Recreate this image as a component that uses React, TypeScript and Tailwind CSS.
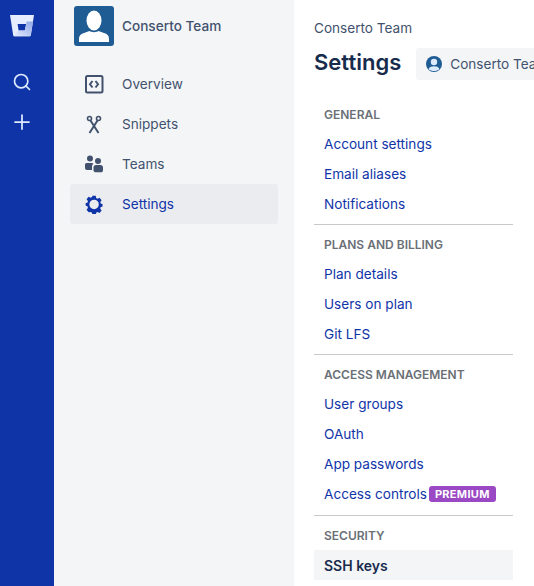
import { Plus, Search } from 'lucide-react'

const navigation = [
  { name: 'Overview', icon: OverviewIcon },
  { name: 'Snippets', icon: SnippetsIcon },
  { name: 'Teams', icon: TeamsIcon },
  { name: 'Settings', icon: GearIcon, active: true },
]

const sections = [
  { title: 'GENERAL', links: ['Account settings', 'Email aliases', 'Notifications'] },
  { title: 'PLANS AND BILLING', links: ['Plan details', 'Users on plan', 'Git LFS'] },
  { title: 'ACCESS MANAGEMENT', links: ['User groups', 'OAuth', 'App passwords', 'Access controls'] },
]

export default function App() {
  return (
    <div className="flex h-[586px] w-[534px] overflow-hidden bg-white font-['Inter',sans-serif] text-[13.6px] text-[#42526e]">
      {/* Global rail */}
      <div className="flex w-[54px] shrink-0 flex-col items-center bg-[#0f34a8] pr-[10px] text-[#deebff]">
        <BucketLogo />
        <Search className="mt-[33px] h-[20px] w-[20px]" strokeWidth={2} />
        <Plus className="mt-[18px] h-[24px] w-[24px]" strokeWidth={1.75} />
      </div>

      {/* Team sidebar */}
      <div className="w-[240px] shrink-0 bg-[#f4f5f7] px-[16px] pt-[6px]">
        <div className="flex items-center pl-[4px]">
          <TeamAvatar />
          <span className="ml-[8px] font-medium">Conserto Team</span>
        </div>
        <nav className="mt-[18px] flex flex-col">
          {navigation.map((item) => (
            <div
              key={item.name}
              className={`flex h-[40px] items-center rounded-[3px] pl-[15px] ${item.active ? 'bg-[#ebecf0] text-[#0f34a8]' : ''}`}
            >
              <item.icon />
              <span className="ml-[17px]">{item.name}</span>
            </div>
          ))}
        </nav>
      </div>

      {/* Main */}
      <div className="min-w-0 flex-1 pl-[20px]">
        <div className="mt-[19px] leading-[18px]">Conserto Team</div>
        <div className="mt-[11px] flex h-[32px] items-center whitespace-nowrap">
          <h1 className="pb-[4px] text-[22px] leading-[28px] font-semibold text-[#172b4d]">Settings</h1>
          <div className="ml-[15px] flex h-[32px] w-[200px] shrink-0 items-center rounded-[3px] bg-[#f4f5f7] pl-[10px]">
            <UserBadge />
            <span className="ml-[8px]">Conserto Team</span>
          </div>
        </div>

        <div className="mt-[25px] w-[199px]">
          {sections.map((section) => (
            <div
              key={section.title}
              className={`border-b border-[#c7c8ca] ${section.links.length > 3 ? 'pb-[6px]' : 'pb-[5px]'}`}
            >
              <Heading>{section.title}</Heading>
              {section.links.map((link) => (
                <div key={link} className="flex h-[30px] items-center whitespace-nowrap pl-[10px] text-[#0f34a8]">
                  {link}
                  {link === 'Access controls' && (
                    <span className="ml-[2px] flex h-[16px] items-center rounded-[3px] bg-[#9b48c4] px-[6px] text-[11px] font-bold tracking-[0.3px] text-white">
                      PREMIUM
                    </span>
                  )}
                </div>
              ))}
            </div>
          ))}
          <Heading>SECURITY</Heading>
          <div className="flex h-[30px] items-center bg-[#f4f5f7] pl-[10px] text-[14px] font-semibold text-[#172b4d]">
            SSH keys
          </div>
        </div>
      </div>
    </div>
  )
}

function Heading({ children }: { children: React.ReactNode }) {
  return (
    <div className="mt-[10px] mb-[4px] h-[20px] whitespace-nowrap pl-[10px] text-[12px] leading-[20px] font-semibold text-[#6b6f76]">
      {children}
    </div>
  )
}

function BucketLogo() {
  return (
    <svg viewBox="0 0 24 24" className="mt-[15px] h-[24px] w-[24px]">
      <defs>
        <linearGradient id="bucketShade" x1="1" y1="0" x2="0" y2="1">
          <stop offset="0" stopColor="#8fa6e6" />
          <stop offset="1" stopColor="#e6edff" />
        </linearGradient>
      </defs>
      <path d="M0 0h24l-3.2 20.2a1.2 1.2 0 0 1-1.2 1H4.4a1.2 1.2 0 0 1-1.2-1z" fill="#e6edff" />
      <path d="M16.4 9H7.6l1 6.4h6.2z" fill="#0f34a8" />
      <path d="M23 6.5h-6.5l-1.7 8.9H8.6l-5 6 .8-.2h15.2a1.2 1.2 0 0 0 1.2-1z" fill="url(#bucketShade)" />
    </svg>
  )
}

function TeamAvatar() {
  return (
    <svg viewBox="0 0 40 40" className="h-[40px] w-[40px] shrink-0">
      <rect width="40" height="40" rx="3" fill="#1f5c94" />
      <ellipse cx="20" cy="14.5" rx="7.5" ry="10" fill="#fff" />
      <path d="M5 36v-3.5c0-3 2-4.5 5-5.5l5.5-2c1.5 1.500 7.500 1.500 9 0l5.500 2c3 1 5 2.500 5 5.500V36z" fill="#fff" />
    </svg>
  )
}

function UserBadge() {
  return (
    <svg viewBox="0 0 16 16" className="h-[16px] w-[16px] shrink-0">
      <circle cx="8" cy="8" r="8" fill="#1f5c94" />
      <circle cx="8" cy="6" r="3.200" fill="#deebff" />
      <path d="M2.500 13.200c1-2.400 3-3 5.500-3s4.500.6 5.500 3c-1.500 1.200-3.500 1.800-5.500 1.800s-4-.6-5.500-1.800z" fill="#deebff" />
    </svg>
  )
}

function OverviewIcon() {
  return (
    <svg viewBox="0 -1 20 20" className="h-[20px] w-[20px] shrink-0" fill="none" stroke="currentColor">
      <rect x="1" y="1" width="16.500" height="16.500" rx="1.500" strokeWidth="2" />
      <path d="M7.500 6 5 9.250l2.500 3.250M10.500 6 13 9.250l-2.500 3.250" strokeWidth="2" />
    </svg>
  )
}

function SnippetsIcon() {
  return (
    <svg viewBox="0 -1 20 20" className="h-[20px] w-[20px] shrink-0" fill="none" stroke="currentColor" strokeWidth="2">
      <circle cx="4.500" cy="3.500" r="2" strokeWidth="1.600" />
      <circle cx="13.500" cy="3.500" r="2" strokeWidth="1.600" />
      <path d="m5.500 5.500 8 12.500M12.500 5.500l-8 12.500" />
    </svg>
  )
}

function TeamsIcon() {
  return (
    <svg viewBox="1 0 20 20" className="h-[20px] w-[20px] shrink-0" fill="currentColor">
      <circle cx="6" cy="4.500" r="3" />
      <circle cx="14" cy="7" r="3" />
      <path d="M1 10.500c0-1 1-1.500 2-1.500h5c.6 0 1 .2 1.400.5A4.500 4.500 0 0 0 8 13v3H3c-1.200 0-2-.8-2-2z" />
      <path d="M9.500 13.500c0-1.400 1-2.500 2.500-2.500h4.500c1.500 0 2.500 1.100 2.500 2.500v3c0 1-1 1.800-2 1.800h-5c-1.400 0-2.500-.8-2.500-1.800z" />
    </svg>
  )
}

function GearIcon() {
  return (
    <svg viewBox="0 -1.500 22 22" className="h-[20px] w-[20px] shrink-0" fill="currentColor">
      <path
        fillRule="evenodd"
        d="M8.200 0.500h3.600l.5 2.400 1.500.7 2.200-1.100 2.300 2.800-1.500 1.900.3 1.600 2.200 1v2.400l-2.200 1-.3 1.600 1.500 1.900-2.300 2.800-2.200-1.100-1.500.7-.5 2.400H8.200l-.5-2.400-1.500-.7L4 18.500l-2.300-2.800 1.500-1.900-.3-1.600-2.200-1V8.800l2.200-1 .3-1.600-1.500-1.900L4 1.500l2.200 1.100 1.500-.7zM10 4.800a5.200 5.200 0 1 0 0 10.400 5.200 5.200 0 0 0 0-10.400z"
      />
    </svg>
  )
}
